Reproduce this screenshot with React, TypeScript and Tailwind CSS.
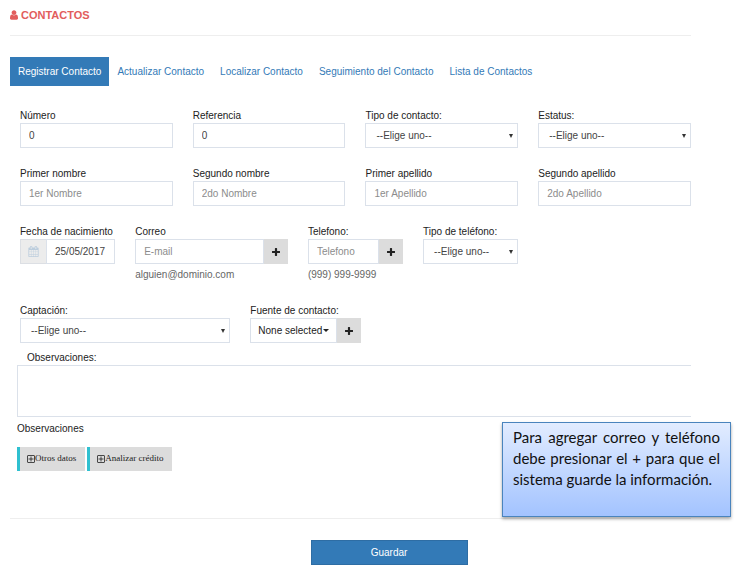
import { useId } from "react";
import type { ReactNode } from "react";

const TABS = [
  { label: "Registrar Contacto", href: "#registrar", active: true },
  { label: "Actualizar Contacto", href: "#actualizar" },
  { label: "Localizar Contacto", href: "#localizar" },
  { label: "Seguimiento del Contacto", href: "#seguimiento" },
  { label: "Lista de Contactos", href: "#lista" },
];

const control = "h-[25px] w-full min-w-0 border border-[#dbe1ea] bg-white text-[#444]";

function UserIcon() {
  return (
    <svg viewBox="256 128 1280 1536" className="h-[10px] w-2" fill="currentColor" aria-hidden="true">
      <path d="M1536 1399q0 109-62.5 187t-150.5 78h-854q-88 0-150.5-78t-62.5-187q0-85 8.5-160.5t31.5-152 58.5-131 94-89 134.5-34.5q131 128 313 128t313-128q76 0 134.5 34.5t94 89 58.5 131 31.5 152 8.5 160.5zm-256-887q0 159-112.5 271.5t-271.5 112.5-271.5-112.5-112.5-271.5 112.5-271.5 271.5-112.5 271.5 112.5 112.5 271.5z" />
    </svg>
  );
}

function CalendarIcon() {
  return (
    <svg viewBox="0 0 1792 1792" className="h-[11px] w-[11px]" fill="currentColor" aria-hidden="true">
      <path d="M192 1664h288v-288h-288v288zm352 0h320v-288h-320v288zm-352-352h288v-320h-288v320zm352 0h320v-320h-320v320zm-352-384h288v-288h-288v288zm736 736h320v-288h-320v288zm-384-736h320v-288h-320v288zm768 736h288v-288h-288v288zm-384-352h320v-320h-320v320zm-352-864v-288q0-13-9.5-22.5t-22.5-9.5h-64q-13 0-22.5 9.5t-9.5 22.5v288q0 13 9.5 22.5t22.5 9.5h64q13 0 22.5-9.5t9.5-22.5zm736 864h288v-320h-288v320zm-384-384h320v-288h-320v288zm384 0h288v-288h-288v288zm32-480v-288q0-13-9.5-22.5t-22.5-9.5h-64q-13 0-22.5 9.5t-9.5 22.5v288q0 13 9.5 22.5t22.5 9.5h64q13 0 22.5-9.5t9.5-22.5zm384-64v1280q0 52-38 90t-90 38h-1408q-52 0-90-38t-38-90v-1280q0-52 38-90t90-38h128v-96q0-66 47-113t113-47h64q66 0 113 47t47 113v96h384v-96q0-66 47-113t113-47h64q66 0 113 47t47 113v96h128q52 0 90 38t38 90z" />
    </svg>
  );
}

function PlusIcon() {
  return (
    <svg viewBox="192 128 1408 1408" className="h-2 w-2" fill="currentColor" aria-hidden="true">
      <path d="M1600 736v192q0 40-28 68t-68 28h-416v416q0 40-28 68t-68 28h-192q-40 0-68-28t-28-68v-416h-416q-40 0-68-28t-28-68v-192q0-40 28-68t68-28h416v-416q0-40 28-68t68-28h192q40 0 68 28t28 68v416h416q40 0 68 28t28 68z" />
    </svg>
  );
}

function BoxPlusIcon() {
  return (
    <svg viewBox="0 0 16 16" className="h-2 w-2" fill="none" stroke="currentColor" strokeWidth="1.6" aria-hidden="true">
      <rect x="1" y="1" width="14" height="14" rx="1" />
      <path d="M8 3v10M3 8h10" />
    </svg>
  );
}

function AddButton({ label }: { label: string }) {
  return (
    <button type="button" aria-label={label} className="flex h-[25px] w-6 shrink-0 items-center justify-center bg-[#dcdcdc] text-[#222]">
      <PlusIcon />
    </button>
  );
}

type FieldProps = { label: string; span: string; children: (id: string) => ReactNode };

function Field({ label, span, children }: FieldProps) {
  const id = useId();
  return (
    <div className={`${span} min-w-0`}>
      <label htmlFor={id} className="block whitespace-nowrap leading-[14px]">
        {label}
      </label>
      {children(id)}
    </div>
  );
}

function TextField({ label, value, placeholder }: { label: string; value?: string; placeholder?: string }) {
  return (
    <Field label={label} span="col-span-3">
      {(id) => (
        <input id={id} type="text" defaultValue={value} placeholder={placeholder} className={`${control} px-2 placeholder:text-[#8c8c8c]`} />
      )}
    </Field>
  );
}

function SelectField({ label, span }: { label: string; span: string }) {
  return (
    <Field label={label} span={span}>
      {(id) => (
        <div className="relative">
          <select id={id} className={`${control} appearance-none pl-[10px] pr-4`}>
            <option>--Elige uno--</option>
          </select>
          <svg viewBox="0 0 4 4" className="pointer-events-none absolute right-[5px] top-[11px] h-1 w-1" fill="#333" aria-hidden="true">
            <path d="M0 0h4L2 4z" />
          </svg>
        </div>
      )}
    </Field>
  );
}

function DetailButton({ children }: { children: ReactNode }) {
  return (
    <button type="button" className="flex h-6 items-center border-l-[3px] border-[#2fc0d0] bg-[#dcdcdc] pl-[7px] pr-[9px] font-['Liberation_Serif',serif] text-[9px] text-[#222]">
      <BoxPlusIcon />
      {children}
    </button>
  );
}

export default function App() {
  return (
    <main className="bg-white pl-[10px] pr-[47px] pt-2 font-['Liberation_Sans',Arial,sans-serif] text-[10px] text-[#222]">
      <h1 className="flex h-[14px] items-center gap-[3px] text-[11px] font-bold text-[#e25d5d]">
        <UserIcon />
        CONTACTOS
      </h1>
      <hr className="mt-[13px] border-[#eee]" />

      <nav className="mt-[21px] flex text-[#337ab7]">
        {TABS.map((tab) => (
          <a
            key={tab.label}
            href={tab.href}
            className={`flex h-[29px] items-center whitespace-nowrap px-2 ${tab.active ? "bg-[#337ab7] text-white" : ""}`}
          >
            {tab.label}
          </a>
        ))}
      </nav>

      <form>
        <div className="mt-[23px] grid grid-cols-12 gap-x-5 gap-y-[19px] pl-[10px]">
          <TextField label="Número" value="0" />
          <TextField label="Referencia" value="0" />
          <SelectField label="Tipo de contacto:" span="col-span-3" />
          <SelectField label="Estatus:" span="col-span-3" />

          <TextField label="Primer nombre" placeholder="1er Nombre" />
          <TextField label="Segundo nombre" placeholder="2do Nombre" />
          <TextField label="Primer apellido" placeholder="1er Apellido" />
          <TextField label="Segundo apellido" placeholder="2do Apellido" />

          <Field label="Fecha de nacimiento" span="col-span-2">
            {(id) => (
              <div className="flex">
                <span className="flex h-[25px] w-[26px] shrink-0 items-center justify-center border border-r-0 border-[#dcdfe4] bg-[#ececec] text-[#bccddd]">
                  <CalendarIcon />
                </span>
                <input id={id} type="text" defaultValue="25/05/2017" className={`${control} pl-2`} />
              </div>
            )}
          </Field>
          <Field label="Correo" span="col-span-3">
            {(id) => (
              <>
                <div className="flex">
                  <input id={id} type="email" placeholder="E-mail" className={`${control} px-2 placeholder:text-[#8c8c8c]`} />
                  <AddButton label="Agregar correo" />
                </div>
                <p className="mt-1 leading-[14px] text-[#666]">alguien@dominio.com</p>
              </>
            )}
          </Field>
          <Field label="Telefono:" span="col-span-2">
            {(id) => (
              <>
                <div className="flex">
                  <input id={id} type="tel" placeholder="Telefono" className={`${control} px-2 placeholder:text-[#8c8c8c]`} />
                  <AddButton label="Agregar teléfono" />
                </div>
                <p className="mt-1 leading-[14px] text-[#666]">(999) 999-9999</p>
              </>
            )}
          </Field>
          <SelectField label="Tipo de teléfono:" span="col-span-2" />
        </div>

        <div className="mt-[22px] grid grid-cols-12 gap-x-5 pl-[10px]">
          <SelectField label="Captación:" span="col-span-4" />
          <Field label="Fuente de contacto:" span="col-span-4">
            {(id) => (
              <div className="flex">
                <button id={id} type="button" className="flex h-[25px] items-center gap-px whitespace-nowrap border border-[#dbe1ea] px-[7px]">
                  None selected
                  <svg viewBox="0 0 6 3" className="h-[3px] w-[6px]" fill="currentColor" aria-hidden="true">
                    <path d="M0 0h6L3 3z" />
                  </svg>
                </button>
                <AddButton label="Agregar fuente" />
              </div>
            )}
          </Field>
        </div>

        <div className="mt-2 pl-[7px]">
          <label htmlFor="observaciones" className="block pl-[10px] leading-[14px]">
            Observaciones:
          </label>
          <textarea id="observaciones" className="block h-[52px] w-full resize-none border border-r-0 border-[#dbe1ea] p-2" />
          <p className="mt-[5px] leading-[14px]">Observaciones</p>
        </div>

        <div className="relative mt-[11px] pl-[7px]">
          <div className="flex gap-0.5">
            <DetailButton>Otros datos</DetailButton>
            <DetailButton>Analizar crédito</DetailButton>
          </div>
          <aside className="absolute -right-10 -top-[25px] h-[95px] w-[229px] border border-[#4a84bd] bg-linear-to-b from-[#e2ecff] to-[#a3c3ff] px-[10px] pt-1 text-justify font-['Lato',sans-serif] text-[15px] leading-[21px] text-[#111] shadow-[0_2px_3px_rgba(0,0,0,0.35)]">
            Para agregar correo y teléfono debe presionar el + para que el sistema guarde la información.
          </aside>
        </div>

        <hr className="mt-[47px] border-[#eee]" />
        <div className="mt-[21px] flex justify-center pl-[77px]">
          <button type="submit" className="h-[25px] w-[157px] border border-[#2e6da4] bg-[#337ab7] text-white">
            Guardar
          </button>
        </div>
      </form>
    </main>
  );
}
